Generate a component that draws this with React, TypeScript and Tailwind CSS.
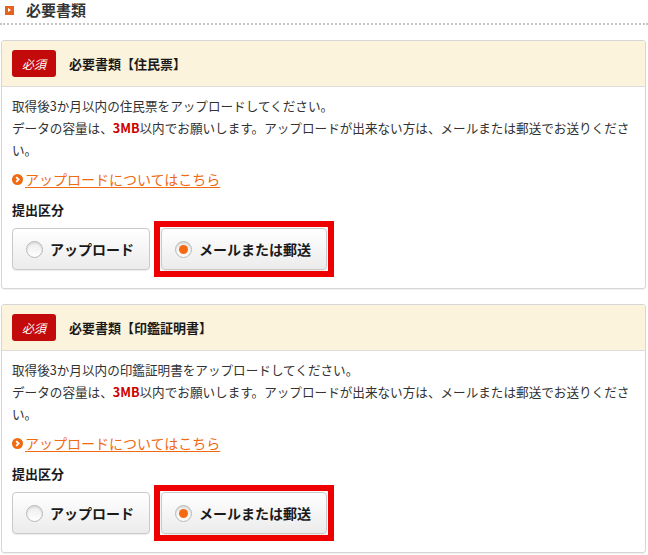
import React from "react";

interface DocItem {
  title: string;
  doc: string;
}

const docs: DocItem[] = [
  { title: "必要書類【住民票】", doc: "住民票" },
  { title: "必要書類【印鑑証明書】", doc: "印鑑証明書" },
];

function Radio({ checked }: { checked: boolean }) {
  return (
    <span className="flex h-[17px] w-[17px] shrink-0 items-center justify-center rounded-full border border-[#b8b8b8] bg-linear-to-b from-[#ececec] to-white shadow-[inset_0_1px_2px_rgba(0,0,0,0.12)]">
      {checked && <span className="h-[9px] w-[9px] rounded-full bg-[#f4690f]" />}
    </span>
  );
}

function ChoiceButton({ label, checked, width }: { label: string; checked: boolean; width: string }) {
  return (
    <div
      className={`flex h-[42px] ${width} items-center gap-[7px] rounded-[4px] border border-[#c9c9c9] bg-linear-to-b from-white to-[#ebebeb] pl-[13px] text-[14px] font-bold text-[#1a1a1a] shadow-[0_1px_1px_rgba(0,0,0,0.08)]`}
    >
      <Radio checked={checked} />
      {label}
    </div>
  );
}

function LinkIcon() {
  return (
    <svg width="11" height="11" viewBox="0 0 11 11" className="shrink-0">
      <circle cx="5.5" cy="5.5" r="5.5" fill="#f06a14" />
      <path d="M4.2 3.1 L6.6 5.5 L4.2 7.9" stroke="#fff" strokeWidth="1.9" fill="none" />
    </svg>
  );
}

function DocCard({ item }: { item: DocItem }) {
  return (
    <div className="overflow-hidden rounded-[3px] border border-[#d6d6d6] shadow-[0_1px_1px_rgba(0,0,0,0.06)]">
      <div className="flex h-[46px] items-center gap-[13px] border-b border-[#dcdcdc] bg-[#fbf3dc] px-[10px]">
        <span className="flex h-[27px] w-[44px] items-center justify-center rounded-[3px] bg-[#c30a0a] text-[12px] italic text-white">
          必須
        </span>
        <span className="text-[13px] font-bold text-[#1a1a1a]">{item.title}</span>
      </div>
      <div className="px-[10px] pb-[11px] pt-[8px] text-[#333]">
        <p className="text-[12.6px] leading-[22px]">
          取得後3か月以内の{item.doc}をアップロードしてください。
          <br />
          データの容量は、<span className="font-bold text-[#cc0000]">3MB</span>
          以内でお願いします。アップロードが出来ない方は、メールまたは郵送でお送りください。
        </p>
        <a className="mt-[7px] flex items-center gap-[2px] text-[14px] leading-[22px] text-[#f06a14]">
          <LinkIcon />
          <span className="underline underline-offset-2">アップロードについてはこちら</span>
        </a>
        <div className="mt-[9px] text-[13px] font-bold leading-[22px] text-[#1a1a1a]">提出区分</div>
        <div className="flex items-center gap-1">
          <ChoiceButton label="アップロード" checked={false} width="w-[138px]" />
          <div className="border-[6px] border-[#ee0000] p-px">
            <ChoiceButton label="メールまたは郵送" checked={true} width="w-[166px]" />
          </div>
        </div>
      </div>
    </div>
  );
}

export default function App() {
  return (
    <div className="min-h-[555px] w-[648px] bg-white font-['Noto_Sans_CJK_JP','Noto_Sans',sans-serif]">
      <div className="flex h-[25px] items-center gap-[12px] border-b-2 border-dotted border-[#c4c4c4] pb-[3px] pl-[5px]">
        <span className="flex h-[9px] w-[9px] items-center justify-center bg-[#e4621c]">
          <span className="h-0 w-0 border-y-[2px] border-l-[3px] border-y-transparent border-l-white" />
        </span>
        <h1 className="text-[15px] font-bold text-[#333]">必要書類</h1>
      </div>
      <div className="ml-px mr-[2px] mt-[15px] flex flex-col gap-[15px]">
        {docs.map((d) => (
          <DocCard key={d.title} item={d} />
        ))}
      </div>
    </div>
  );
}
